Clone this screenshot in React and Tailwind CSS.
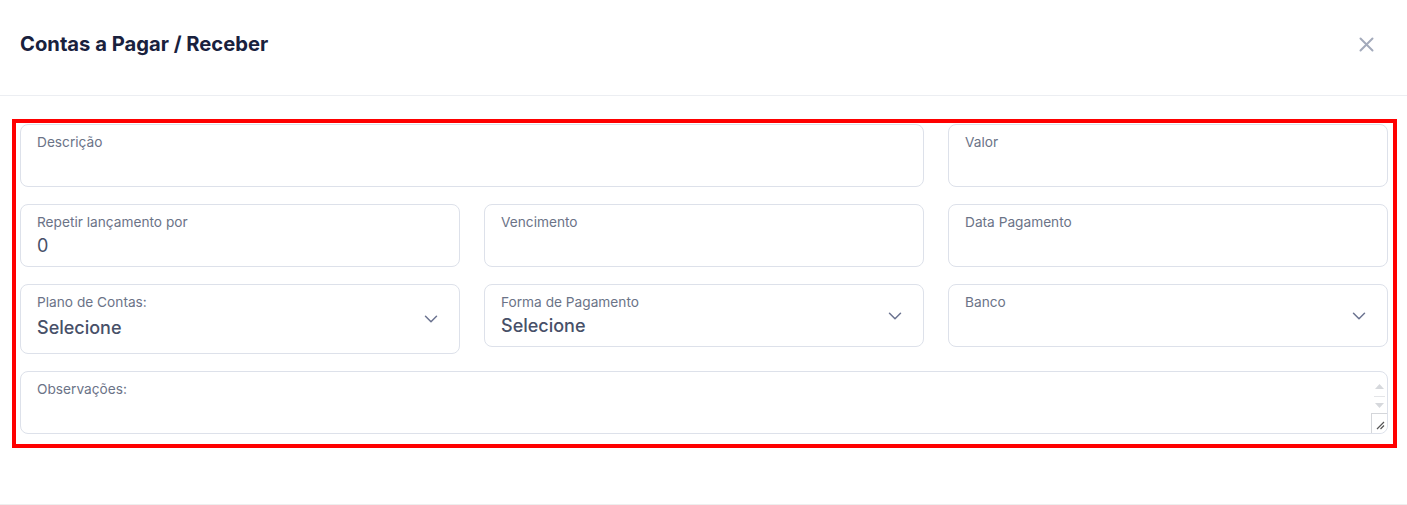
import React from "react";

function Chevron() {
  return (
    <svg width="14" height="8" viewBox="0 0 14 8" fill="none" className="absolute right-[21px] top-1/2 -translate-y-1/2">
      <path d="M1.5 1.2l5.5 5.5 5.5-5.5" stroke="#6b7390" strokeWidth="1.5" strokeLinecap="round" strokeLinejoin="round" />
    </svg>
  );
}

function Field({ label, value, select, h = "h-[63px]", valueClass = "text-[18px] leading-[24px]" }) {
  return (
    <div className={`relative ${h} rounded-lg border border-[#dde1ea] bg-white pl-[16px] pr-[40px] pt-[7px]`}>
      <div className="text-[13.7px] leading-[20px] text-[#6b7387]">{label}</div>
      {value !== undefined && (
        <div className={`${valueClass} mt-[2px] font-medium text-[#475068]`}>{value}</div>
      )}
      {select && <Chevron />}
    </div>
  );
}

export default function App() {
  return (
    <div className="w-[1407px] h-[505px] bg-white flex flex-col" style={{ fontFamily: "Inter, 'Noto Sans', sans-serif" }}>
      <div className="h-[96px] shrink-0 border-b border-[#eceef2] flex items-start justify-between pl-[20px] pr-[33px] pt-[30px]">
        <h1 className="text-[20.2px] leading-[28px] font-bold text-[#19213d]">Contas a Pagar / Receber</h1>
        <svg width="15" height="15" viewBox="0 0 15 15" className="mt-[7px]">
          <path d="M1.5 1.5l12 12M13.5 1.5l-12 12" stroke="#a3aabb" strokeWidth="2" strokeLinecap="round" />
        </svg>
      </div>
      <div className="flex-1 pt-[23px] pl-[12px] pr-[10px]">
        <div className="border-[4px] border-[#ff0000] pl-[4px] pr-[5px] pt-[1px] pb-[10px] flex flex-col gap-[17px]">
          <div className="grid grid-cols-3 gap-x-[24px]">
            <div className="col-span-2">
              <Field label="Descrição" />
            </div>
            <Field label="Valor" />
          </div>
          <div className="grid grid-cols-3 gap-x-[24px]">
            <Field label="Repetir lançamento por" value="0" valueClass="text-[18px] leading-[24px] !font-normal" />
            <Field label="Vencimento" />
            <Field label="Data Pagamento" />
          </div>
          <div className="grid grid-cols-3 gap-x-[24px] items-start">
            <Field label="Plano de Contas:" value="Selecione" select h="h-[70px]" valueClass="text-[18px] leading-[28px]" />
            <Field label="Forma de Pagamento" value="Selecione" select valueClass="text-[18px] leading-[24px]" />
            <Field label="Banco" select />
          </div>
          <div className="relative h-[63px] rounded-lg border border-[#dde1ea] bg-white pl-[16px] pt-[7px]">
            <div className="text-[13.7px] leading-[20px] text-[#6b7387]">Observações:</div>
            <div className="absolute right-0 top-0 bottom-0 w-[15px]">
              <svg width="15" height="44" viewBox="0 0 15 44" className="absolute top-[3px] left-0">
                <path d="M3 14h9L7.5 9z" fill="#d6d8dc" />
                <path d="M2 21.5h11" stroke="#e4e5e8" strokeWidth="1" />
                <path d="M3 28h9l-4.5 5z" fill="#d6d8dc" />
              </svg>
              <div className="absolute bottom-0 right-0 w-[16px] h-[20px] border-l border-t border-[#d4d6da] bg-white rounded-br-lg">
                <svg width="10" height="10" viewBox="0 0 10 10" className="absolute right-[2px] bottom-[3px]">
                  <path d="M2 9l7-7M5.5 9L9 5.5" stroke="#555" strokeWidth="1.2" />
                </svg>
              </div>
            </div>
          </div>
        </div>
      </div>
      <div className="h-[1px] shrink-0 border-t border-[#eeeeee]" />
    </div>
  );
}
